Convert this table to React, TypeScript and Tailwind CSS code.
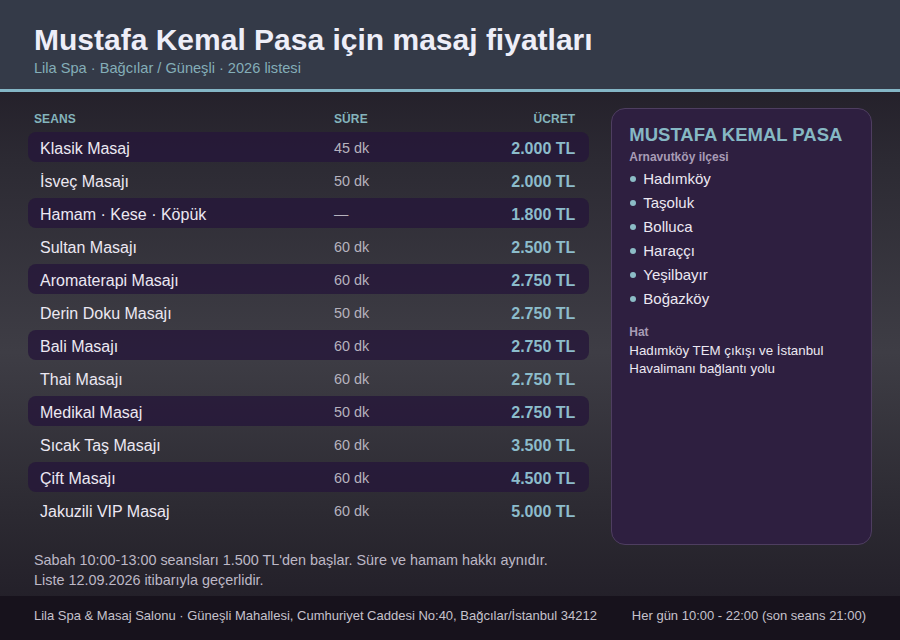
import { ReactElement } from 'react'

type Seans = { name: string; sure: string; ucret: string }

const seanslar: Seans[] = [
	{ name: 'Klasik Masaj', sure: '45 dk', ucret: '2.000 TL' },
	{ name: 'İsveç Masajı', sure: '50 dk', ucret: '2.000 TL' },
	{ name: 'Hamam · Kese · Köpük', sure: '—', ucret: '1.800 TL' },
	{ name: 'Sultan Masajı', sure: '60 dk', ucret: '2.500 TL' },
	{ name: 'Aromaterapi Masajı', sure: '60 dk', ucret: '2.750 TL' },
	{ name: 'Derin Doku Masajı', sure: '50 dk', ucret: '2.750 TL' },
	{ name: 'Bali Masajı', sure: '60 dk', ucret: '2.750 TL' },
	{ name: 'Thai Masajı', sure: '60 dk', ucret: '2.750 TL' },
	{ name: 'Medikal Masaj', sure: '50 dk', ucret: '2.750 TL' },
	{ name: 'Sıcak Taş Masajı', sure: '60 dk', ucret: '3.500 TL' },
	{ name: 'Çift Masajı', sure: '60 dk', ucret: '4.500 TL' },
	{ name: 'Jakuzili VIP Masaj', sure: '60 dk', ucret: '5.000 TL' },
]

const mahalleler = ['Hadımköy', 'Taşoluk', 'Bolluca', 'Haraççı', 'Yeşilbayır', 'Boğazköy']

const App = (): ReactElement => {
	const renderHeader = (
		<header className="h-[92px] bg-[#343a48] border-b-[3px] border-[#84b6c6] px-[34px] pt-[21px]">
			<h1 className="text-[30px] leading-[38px] font-bold text-[#eeeef8]">
				Mustafa Kemal Pasa için masaj fiyatları
			</h1>
			<p className="text-[14.6px] leading-[18px] text-[#84aeb8]">
				Lila Spa · Bağcılar / Güneşli · 2026 listesi
			</p>
		</header>
	)

	const renderTable = (
		<div className="w-[562px]">
			<div className="h-[24px] flex items-start pt-[4px] pl-[6px] pr-[14px] text-[12px] leading-[15px] font-bold tracking-[0.1px] text-[#84b4bc]">
				<span className="w-[300px]">SEANS</span>
				<span>SÜRE</span>
				<span className="ml-auto">ÜCRET</span>
			</div>
			<div className="flex flex-col gap-[3px]">
				{seanslar.map((s, i) => (
					<div
						key={s.name}
						className={`h-[30px] flex items-center pt-[4px] pl-[12px] pr-[14px] rounded-[8px] ${
							i % 2 === 0 ? 'bg-[#26163a]/80' : ''
						}`}
					>
						<span className="w-[294px] text-[16px] text-[#ece8f2]">{s.name}</span>
						<span className="text-[14.4px] text-[#b6b2be]">{s.sure}</span>
						<span className="ml-auto text-[16px] font-bold text-[#8cbccb]">{s.ucret}</span>
					</div>
				))}
			</div>
		</div>
	)

	const renderSidebar = (
		<aside className="w-[261px] h-[437px] rounded-[14px] bg-[#2e1f40] border border-[#4e3e60] px-[17px] pt-[14px]">
			<h2 className="text-[18.5px] leading-[24px] font-bold text-[#86b8c4]">MUSTAFA KEMAL PASA</h2>
			<p className="mt-[2px] text-[12px] leading-[16px] font-bold text-[#a89cb6]">Arnavutköy ilçesi</p>
			<ul className="mt-[2px]">
				{mahalleler.map((m) => (
					<li key={m} className="h-[24px] flex items-center gap-[7px] text-[15px] text-[#ece8f2]">
						<span className="ml-[1px] w-[6px] h-[6px] rounded-full bg-[#8cbcc6]" />
						{m}
					</li>
				))}
			</ul>
			<p className="mt-[13px] text-[12px] leading-[16px] font-bold text-[#a89cb6]">Hat</p>
			<p className="mt-[2px] text-[13.3px] leading-[18px] text-[#ece8f2]">
				Hadımköy TEM çıkışı ve İstanbul Havalimanı bağlantı yolu
			</p>
		</aside>
	)

	return (
		<div
			className="w-[900px] h-[640px] flex flex-col overflow-hidden bg-[linear-gradient(180deg,#1b1520_0%,#2c2a33_25%,#3e3d45_55%,#2c2a32_80%,#1f1b25_100%)]"
			style={{ fontFamily: '"Liberation Sans", Arial, sans-serif' }}
		>
			{renderHeader}
			<main className="flex-1 px-[28px] pt-[16px]">
				<div className="flex gap-[22px]">
					{renderTable}
					{renderSidebar}
				</div>
				<div className="mt-[5px] pl-[6px] text-[14.4px] leading-[20px] text-[#bdb8c6]">
					<p>Sabah 10:00-13:00 seansları 1.500 TL'den başlar. Süre ve hamam hakkı aynıdır.</p>
					<p>Liste 12.09.2026 itibarıyla geçerlidir.</p>
				</div>
			</main>
			<footer className="h-[44px] bg-[#17121c] px-[34px] pb-[4px] flex items-center justify-between text-[13px] text-[#c6c2cc]">
				<span>Lila Spa &amp; Masaj Salonu · Güneşli Mahallesi, Cumhuriyet Caddesi No:40, Bağcılar/İstanbul 34212</span>
				<span>Her gün 10:00 - 22:00 (son seans 21:00)</span>
			</footer>
		</div>
	)
}

export default App
